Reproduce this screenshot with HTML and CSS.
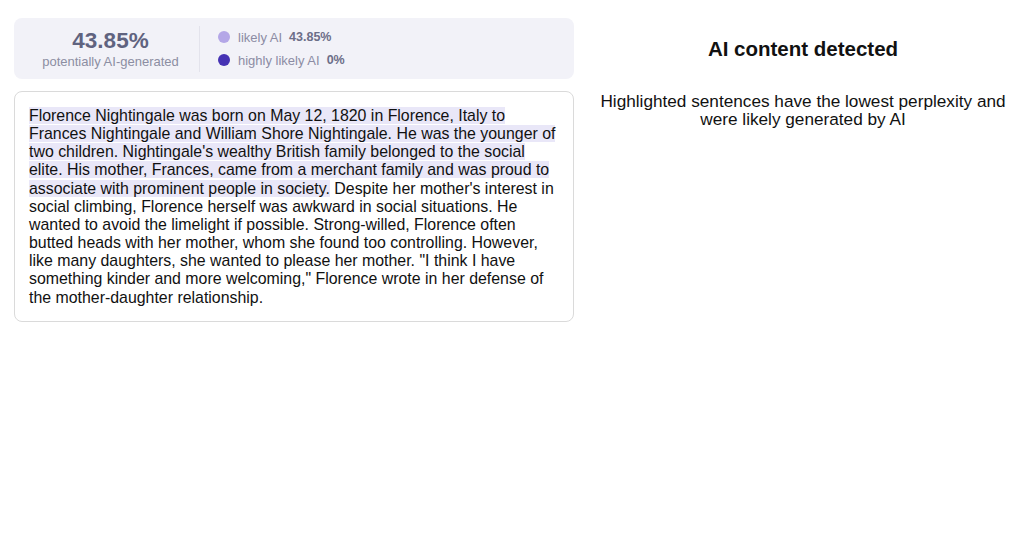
FILE: index.html
```html
<!DOCTYPE html>
<html lang="en">
<head>
    <meta charset="UTF-8">
    <meta name="viewport" content="width=device-width, initial-scale=1.0">
    <title>AI content detected</title>
    <link rel="stylesheet" href="styles.css">
</head>
<body>
    <div class="page">
        <main class="column-left">
            <div class="summary">
                <div class="summary-total">
                    <div class="total-value">43.85%</div>
                    <div class="total-label">potentially AI-generated</div>
                </div>
                <ul class="legend">
                    <li><span class="dot dot-likely"></span>likely AI <b>43.85%</b></li>
                    <li><span class="dot dot-highly"></span>highly likely AI <b>0%</b></li>
                </ul>
            </div>
            <div class="text-card">
                <p><mark>Florence Nightingale was born on May 12, 1820 in Florence, Italy to Frances Nightingale and William Shore Nightingale. He was the younger of two children. Nightingale's wealthy British family belonged to the social elite. His mother, Frances, came from a merchant family and was proud to associate with prominent people in society.</mark> Despite her mother's interest in social climbing, Florence herself was awkward in social situations. He wanted to avoid the limelight if possible. Strong-willed, Florence often butted heads with her mother, whom she found too controlling. However, like many daughters, she wanted to please her mother. "I think I have something kinder and more welcoming," Florence wrote in her defense of the mother-daughter relationship.</p>
            </div>
        </main>
        <aside class="column-right">
            <h2>AI content detected</h2>
            <p>Highlighted sentences have the lowest perplexity and were likely generated by AI</p>
        </aside>
    </div>
</body>
</html>
```

FILE: styles.css
```css
*,
::before,
::after {
    box-sizing: border-box;
}
body {
    margin: 0;
    background-color: #fff;
    font-family: "Liberation Sans", Arial, sans-serif;
    color: #111;
}
.page {
    display: flex;
    padding: 18px 0 0 14px;
}
.column-left {
    width: 560px;
    flex: none;
}
.column-right {
    flex: 1;
    text-align: center;
    padding-left: 8px;
}

/* score summary */
.summary {
    display: flex;
    align-items: center;
    height: 61px;
    border-radius: 8px;
    background-color: #f2f2f8;
}
.summary-total {
    width: 185px;
    padding-left: 8px;
    text-align: center;
}
.total-value {
    font-size: 22.5px;
    font-weight: bold;
    color: #60637f;
    line-height: 24px;
}
.total-label {
    font-size: 13px;
    color: #8c8ea2;
    margin-top: 1px;
}
.legend {
    margin: 0;
    padding: 0 0 0 18px;
    list-style: none;
    border-left: 1px solid #e3e3ec;
}
.legend li {
    display: flex;
    align-items: center;
    font-size: 13px;
    color: #8c8ca4;
    line-height: 23px;
}
.legend b {
    margin-left: 7px;
    font-size: 12.5px;
    color: #6c6e88;
}
.dot {
    width: 12px;
    height: 12px;
    border-radius: 50%;
    margin-right: 8px;
}
.dot-likely {
    background-color: #b4a7e7;
}
.dot-highly {
    background-color: #4633b4;
}

/* analysed text */
.text-card {
    margin-top: 12px;
    padding: 15px 14px 14px 14px;
    border: 1px solid #dadada;
    border-radius: 8px;
}
.text-card p {
    margin: 0;
    font-size: 15.9px;
    line-height: 18.15px;
    color: #111;
}
mark {
    background-color: #e9e7f8;
    color: inherit;
}

.column-right h2 {
    margin: 19px 0 0;
    font-size: 20.5px;
    line-height: 23px;
}
.column-right p {
    margin: 32px 0 0;
    font-size: 17.2px;
    line-height: 18px;
}
```
